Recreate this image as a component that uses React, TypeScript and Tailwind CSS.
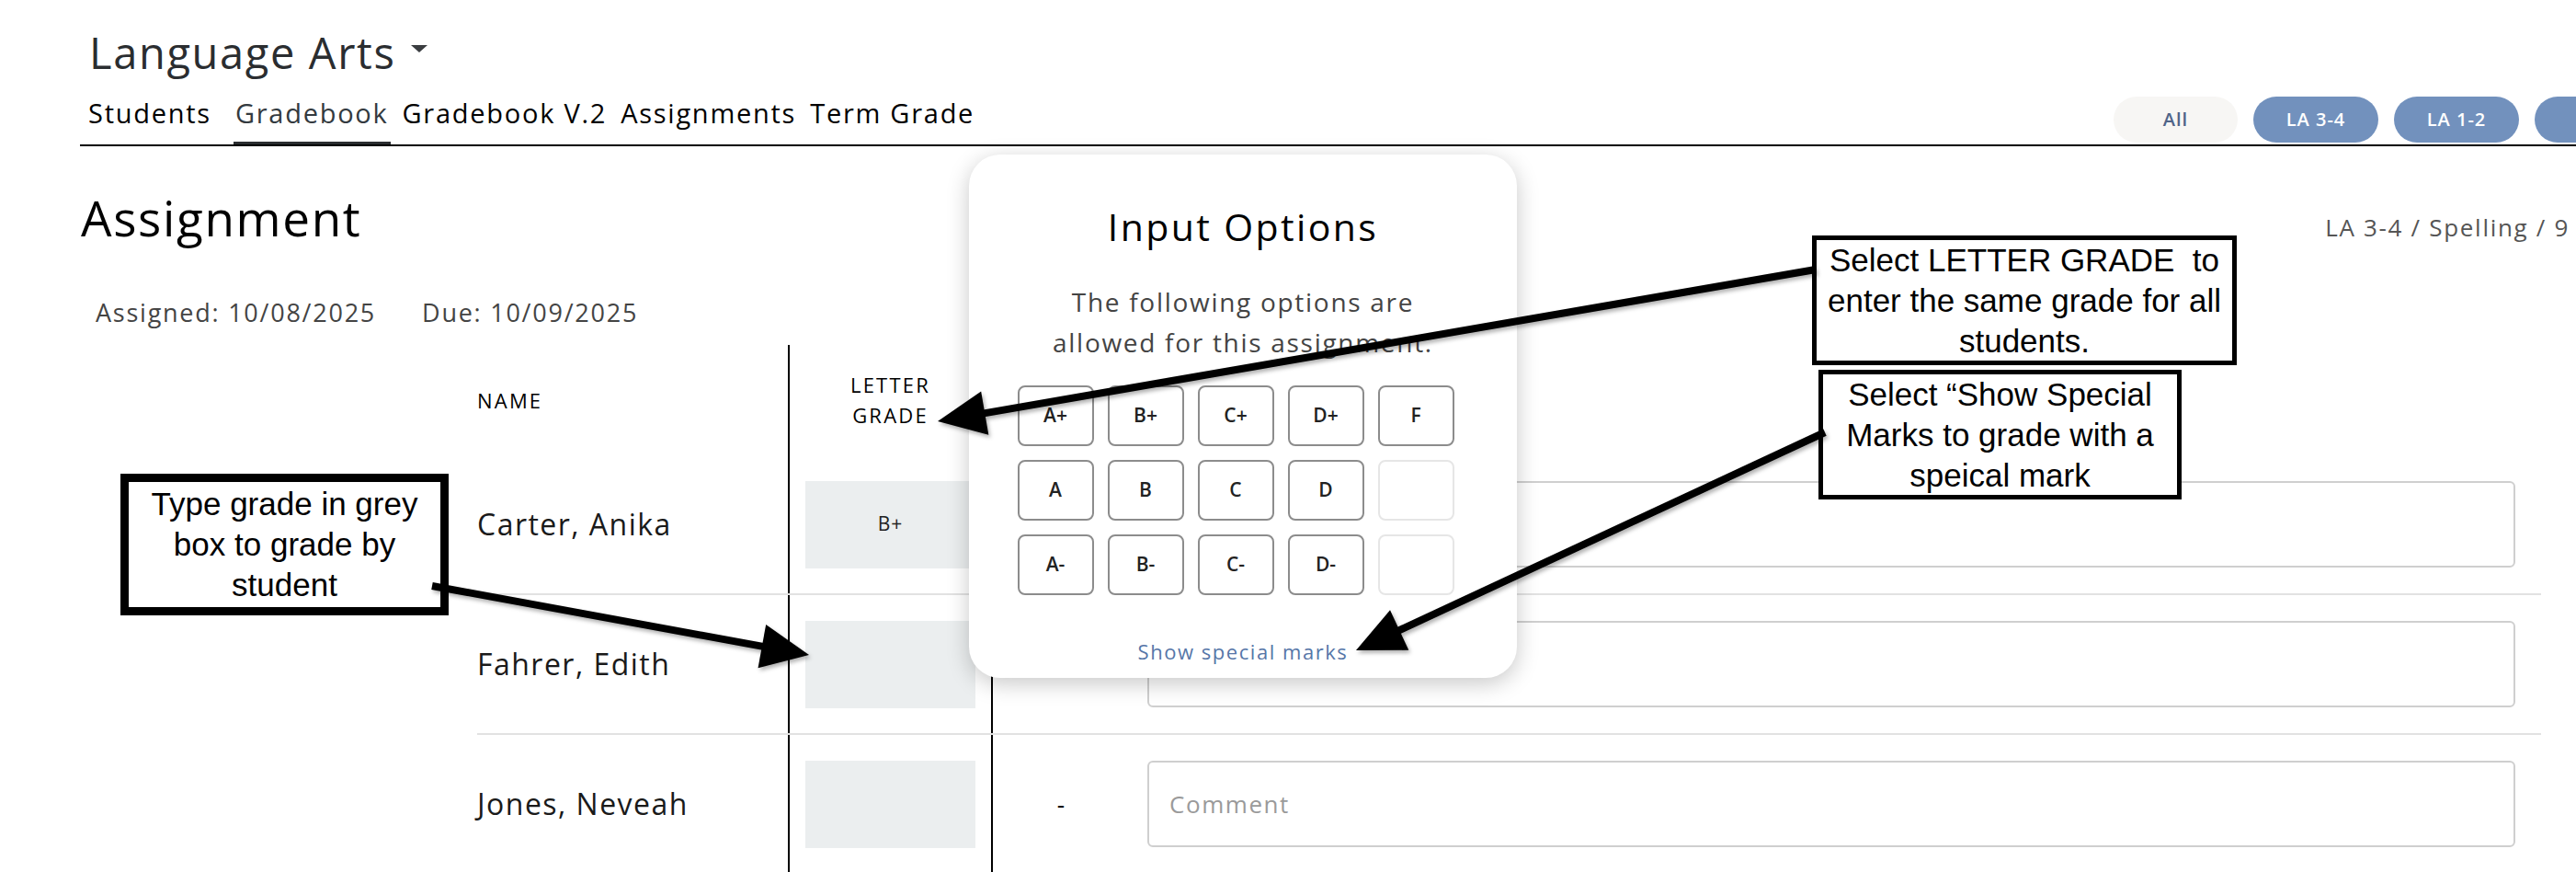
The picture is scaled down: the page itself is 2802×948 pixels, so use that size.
import React from "react";

const tabs = ["Students", "Gradebook", "Gradebook V.2", "Assignments", "Term Grade"];
const pills = ["LA 3-4", "LA 1-2"];
const students = [
  { name: "Carter, Anika", grade: "B+" },
  { name: "Fahrer, Edith", grade: "" },
  { name: "Jones, Neveah", grade: "" },
];
const grades = [
  ["A+", "B+", "C+", "D+", "F"],
  ["A", "B", "C", "D", ""],
  ["A-", "B-", "C-", "D-", ""],
];

function Arrow({ from, to }: { from: [number, number]; to: [number, number] }) {
  const [x1, y1] = from;
  const [x2, y2] = to;
  const dx = x2 - x1;
  const dy = y2 - y1;
  const len = Math.hypot(dx, dy);
  const ux = dx / len;
  const uy = dy / len;
  const px = -uy;
  const py = ux;
  const head = 52;
  const half = 24;
  const bx = x2 - ux * head;
  const by = y2 - uy * head;
  return (
    <g filter="url(#arrowShadow)">
      <line x1={x1} y1={y1} x2={bx + ux * 4} y2={by + uy * 4} stroke="#000" strokeWidth={8} />
      <polygon
        points={`${x2},${y2} ${bx + px * half},${by + py * half} ${bx - px * half},${by - py * half}`}
        fill="#000"
      />
    </g>
  );
}

function Callout({ lines, className }: { lines: string[]; className: string }) {
  return (
    <div
      className={`absolute bg-white border-black flex flex-col items-center justify-center text-center text-black font-['Liberation_Sans',Arial,sans-serif] tracking-normal text-[35px] leading-[44px] whitespace-pre ${className}`}
    >
      {lines.map((l) => (
        <div key={l}>{l}</div>
      ))}
    </div>
  );
}

export default function App() {
  return (
    <div className="relative w-[2802px] h-[948px] overflow-hidden bg-white font-['Open_Sans',sans-serif] text-[#1c1c1c]">
      {/* header */}
      <div className="ml-[87px] pt-[30px]">
        <div className="pl-[10px] flex items-center gap-[16px] h-[54px]">
          <span className="text-[47px] leading-[54px] tracking-[0.035em] text-[#2a2d30]">Language Arts</span>
          <span className="w-0 h-0 border-l-[9px] border-r-[9px] border-t-[8px] border-l-transparent border-r-transparent border-t-[#3a3d40] -mt-[8px]" />
        </div>
        <div className="mt-[21px] flex items-start border-b-2 border-black">
          <div className="flex pl-[7px] gap-[11px]">
            {tabs.map((t, i) => (
              <div
                key={t}
                className={`px-[2px] pb-[14px] border-b-[3px] text-[29px] leading-[35px] tracking-[0.06em] ${
                  i === 1 ? "border-[#2a2d30] text-[#333a40]" : "border-transparent text-black"
                } ${i === 0 ? "mr-[11px]" : ""}`}
              >
                {t}
              </div>
            ))}
          </div>
          <div className="flex-1" />
          <div className="flex gap-[17px] shrink-0 -mr-[91px]">
            <div className="shrink-0 w-[135px] h-[50px] rounded-full bg-[#f7f6f4] text-[#4f6489] text-[20px] tracking-[0.05em] font-semibold flex items-center justify-center">
              All
            </div>
            {pills.map((p) => (
              <div
                key={p}
                className="shrink-0 w-[136px] h-[50px] rounded-full bg-[#7291bd] text-white text-[20px] tracking-[0.05em] font-semibold flex items-center justify-center"
              >
                {p}
              </div>
            ))}
            <div className="shrink-0 w-[136px] h-[50px] rounded-full bg-[#7291bd]" />
          </div>
        </div>
      </div>

      {/* assignment heading */}
      <div className="ml-[88px] mt-[47px] pr-[7px] flex items-baseline justify-between">
        <span className="text-[53px] leading-[62px] tracking-[0.031em] text-black">Assignment</span>
        <span className="text-[26px] tracking-[0.065em] text-[#555]">LA 3-4 / Spelling / 9</span>
      </div>
      <div className="ml-[104px] mt-[56px] flex gap-[50px] text-[27px] leading-[31px] tracking-[0.065em] text-[#444]">
        <span>Assigned: 10/08/2025</span>
        <span>Due: 10/09/2025</span>
      </div>

      {/* table */}
      <div className="ml-[519px] mt-[20px] mr-[38px]">
        <div className="flex h-[120px]">
          <div className="w-[340px] border-r-2 border-black flex items-center text-[22px] tracking-[0.1em] uppercase text-black">
            Name
          </div>
          <div className="w-[221px] border-r-2 border-black flex items-center justify-center text-center text-[22px] leading-[33px] tracking-[0.1em] uppercase text-black">
            Letter
            <br />
            Grade
          </div>
          <div className="flex-1" />
        </div>
        {students.map((s) => (
          <div key={s.name} className="flex h-[152px] border-b-2 border-[#e2e2e2]">
            <div className="w-[340px] border-r-2 border-black flex items-center text-[32px] tracking-[0.046em] text-[#1a1a1a]">
              {s.name}
            </div>
            <div className="w-[221px] border-r-2 border-black flex items-center justify-center">
              <div className="w-[185px] h-[95px] bg-[#ebeeef] flex items-center justify-center text-[21px] tracking-[0.05em] text-[#222]">
                {s.grade}
              </div>
            </div>
            <div className="w-[148px] flex items-center justify-center text-[26px] text-black">-</div>
            <div className="flex-1 flex items-center pl-[20px] pr-[28px]">
              <div className="w-full h-[94px] border-2 border-[#cfcfcf] rounded-[6px] flex items-center px-[22px] text-[26px] tracking-[0.06em] text-[#9a9a9a]">
                Comment
              </div>
            </div>
          </div>
        ))}
      </div>

      {/* input options popover */}
      <div className="absolute left-[1054px] top-[168px] w-[596px] h-[569px] bg-white rounded-[34px] shadow-[0_6px_24px_rgba(0,0,0,0.22)] flex flex-col items-center pt-[54px]">
        <div className="text-[41px] leading-[49px] tracking-[0.058em] text-black">Input Options</div>
        <div className="mt-[35px] text-center text-[28px] leading-[44px] tracking-[0.061em] text-[#444]">
          The following options are
          <br />
          allowed for this assignment.
        </div>
        <div className="mt-[25px] mr-[16px] grid grid-cols-5 gap-[15px]">
          {grades.flat().map((g, i) => (
            <div
              key={i}
              className={`w-[83px] h-[66px] rounded-[8px] border-2 flex items-center justify-center text-[21px] font-semibold tracking-normal text-[#222] ${
                g ? "border-[#8c8c8c]" : "border-[#e6e6e6]"
              }`}
            >
              {g}
            </div>
          ))}
        </div>
        <div className="mt-[47px] text-[22px] leading-[28px] tracking-[0.07em] text-[#5676a8]">Show special marks</div>
      </div>

      {/* annotations */}
      <Callout
        lines={["Select LETTER GRADE  to", "enter the same grade for all", "students."]}
        className="left-[1971px] top-[256px] w-[462px] h-[141px] border-[5px]"
      />
      <Callout
        lines={["Select \u201cShow Special", "Marks to grade with a", "speical mark"]}
        className="left-[1978px] top-[402px] w-[395px] h-[141px] border-[5px] leading-[43px]"
      />
      <Callout
        lines={["Type grade in grey", "box to grade by", "student"]}
        className="left-[131px] top-[515px] w-[357px] h-[154px] border-[9px]"
      />

      <svg className="absolute inset-0 pointer-events-none" width={2802} height={948} viewBox="0 0 2802 948">
        <defs>
          <filter id="arrowShadow" x="-10%" y="-10%" width="120%" height="120%">
            <feDropShadow dx="2" dy="3" stdDeviation="2" floodColor="#000" floodOpacity="0.3" />
          </filter>
        </defs>
        <Arrow from={[1975, 293]} to={[1020, 458]} />
        <Arrow from={[1985, 470]} to={[1475, 707]} />
        <Arrow from={[470, 637]} to={[880, 712]} />
      </svg>
    </div>
  );
}
